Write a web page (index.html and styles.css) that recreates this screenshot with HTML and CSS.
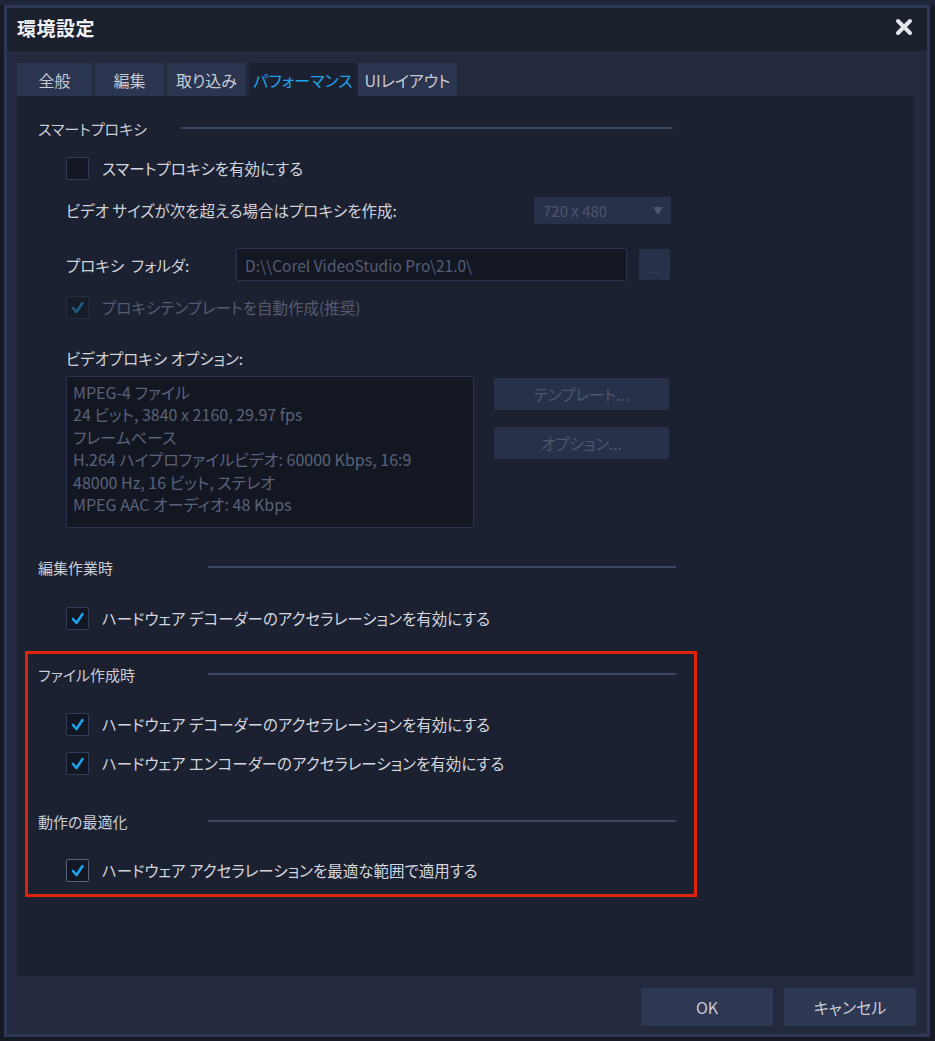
FILE: index.html
```html
<!DOCTYPE html>
<html lang="ja">
<head>
<meta charset="utf-8">
<title>環境設定</title>
<link rel="stylesheet" href="styles.css">
</head>
<body>
<div class="screen">
  <div class="dialog">
    <div class="titlebar">
      <span class="title">環境設定</span>
      <svg class="close" width="18" height="18" viewBox="0 0 18 18"><path d="M3 3 L15 15 M15 3 L3 15" stroke="#e4e6ee" stroke-width="4" stroke-linecap="round"/></svg>
    </div>
    <div class="body">
      <div class="tabs">
        <div class="tab t1">全般</div>
        <div class="tab t2">編集</div>
        <div class="tab t3">取り込み</div>
        <div class="tab t4 active">パフォーマンス</div>
        <div class="tab t5">UIレイアウト</div>
      </div>
      <div class="panel">
        <div class="heading h-proxy"><span class="htext">スマートプロキシ</span><span class="hline"></span></div>

        <div class="cbrow r-smart">
          <span class="cb"></span><span class="cblabel">スマートプロキシを有効にする</span>
        </div>

        <div class="row r-size">
          <span class="label">ビデオ サイズが次を超える場合はプロキシを作成:</span>
          <div class="dropdown"><span>720 x 480</span><span class="arrow">▼</span></div>
        </div>

        <div class="row r-folder">
          <span class="label folder-label">プロキシ&nbsp; フォルダ:</span>
          <div class="input">D:\\Corel VideoStudio Pro\21.0\</div>
          <div class="dots">...</div>
        </div>

        <div class="cbrow r-auto disabled">
          <span class="cb checked"><svg width="21" height="21" viewBox="0 0 21 21"><path d="M6 11 L9.5 15 L15.5 6" fill="none" stroke="#1c5d80" stroke-width="2.6" stroke-linecap="round" stroke-linejoin="round"/></svg></span><span class="cblabel">プロキシテンプレートを自動作成(推奨)</span>
        </div>

        <div class="row r-optlabel"><span class="label">ビデオプロキシ オプション:</span></div>

        <div class="optrow">
          <div class="textbox">
            <div>MPEG-4 ファイル</div>
            <div>24 ビット, 3840 x 2160, 29.97 fps</div>
            <div>フレームベース</div>
            <div>H.264 ハイプロファイルビデオ: 60000 Kbps, 16:9</div>
            <div>48000 Hz, 16 ビット, ステレオ</div>
            <div>MPEG AAC オーディオ: 48 Kbps</div>
          </div>
          <div class="optbtns">
            <div class="dbtn">テンプレート...</div>
            <div class="dbtn">オプション...</div>
          </div>
        </div>

        <div class="heading h-edit"><span class="htext">編集作業時</span><span class="hline"></span></div>
        <div class="cbrow r-edit">
          <span class="cb checked"><svg width="21" height="21" viewBox="0 0 21 21"><path d="M6 11 L9.5 15 L15.5 6" fill="none" stroke="#1ba3ec" stroke-width="2.6" stroke-linecap="round" stroke-linejoin="round"/></svg></span><span class="cblabel">ハードウェア デコーダーのアクセラレーションを有効にする</span>
        </div>

        <div class="highlight">
          <div class="heading h-in"><span class="htext">ファイル作成時</span><span class="hline"></span></div>
          <div class="cbrow r-dec">
            <span class="cb checked"><svg width="21" height="21" viewBox="0 0 21 21"><path d="M6 11 L9.5 15 L15.5 6" fill="none" stroke="#1ba3ec" stroke-width="2.6" stroke-linecap="round" stroke-linejoin="round"/></svg></span><span class="cblabel">ハードウェア デコーダーのアクセラレーションを有効にする</span>
          </div>
          <div class="cbrow r-enc">
            <span class="cb checked"><svg width="21" height="21" viewBox="0 0 21 21"><path d="M6 11 L9.5 15 L15.5 6" fill="none" stroke="#1ba3ec" stroke-width="2.6" stroke-linecap="round" stroke-linejoin="round"/></svg></span><span class="cblabel">ハードウェア エンコーダーのアクセラレーションを有効にする</span>
          </div>
          <div class="heading h-opt"><span class="htext">動作の最適化</span><span class="hline"></span></div>
          <div class="cbrow r-opt">
            <span class="cb checked light"><svg width="21" height="21" viewBox="0 0 21 21"><path d="M6 11 L9.5 15 L15.5 6" fill="none" stroke="#1ba3ec" stroke-width="2.6" stroke-linecap="round" stroke-linejoin="round"/></svg></span><span class="cblabel">ハードウェア アクセラレーションを最適な範囲で適用する</span>
          </div>
        </div>
      </div>
      <div class="footer">
        <div class="btn">OK</div>
        <div class="btn">キャンセル</div>
      </div>
    </div>
  </div>
</div>
</body>
</html>
```

FILE: styles.css
```css
* { box-sizing: border-box; }
html, body { margin: 0; padding: 0; }
body {
  background: #161a25;
  font-family: "Noto Sans CJK JP", "Noto Sans", sans-serif;
  font-feature-settings: "palt";
  color: #d0d3db;
  font-size: 15px;
}
.screen {
  width: 935px;
  height: 1041px;
  padding: 5px 0 0 4px;
  background: linear-gradient(#20263a 0 5px, #161a25 5px);
}
.dialog {
  width: 926px;
  height: 1032px;
  border: 3px solid #2f3758;
  background: #232a3e;
  display: flex;
  flex-direction: column;
}
.titlebar {
  height: 43px;
  background: #1b202d;
  display: flex;
  align-items: center;
  justify-content: space-between;
  padding: 0 14px 5px 10px;
  flex: none;
}
.title {
  font-size: 19px;
  font-weight: 700;
  color: #f0f1f5;
  letter-spacing: 0.5px;
  font-feature-settings: normal;
}
.close { display: block; }
.body {
  flex: 1;
  display: flex;
  flex-direction: column;
  padding: 12px 13px 0 10px;
}
.tabs {
  display: flex;
  gap: 3px;
  height: 33px;
  flex: none;
}
.tab {
  background: #2c3550;
  color: #c6c9d2;
  display: flex;
  align-items: center;
  justify-content: center;
  font-size: 16px;
}
.t1 { width: 75px; }
.t2 { width: 69px; }
.t3 { width: 79px; }
.t4 { width: 108px; }
.t5 { width: 99px; margin-left: -2px; }
.tab.active { background: #1c2131; color: #1ea3ea; }
.panel {
  background: #1c2131;
  height: 880px;
  padding: 20px 0 0 21px;
  flex: none;
}
.heading {
  display: flex;
  align-items: center;
  height: 24px;
  width: 638px;
  color: #c9ccd5;
  font-size: 15px;
}
.htext { flex: none; width: 170px; }
.h-proxy .htext { width: 143px; }
.h-proxy { width: 635px; }
.hline { flex: 1; height: 2px; background: #3b4566; }
.cbrow {
  display: flex;
  align-items: center;
  height: 24px;
  padding-left: 28px;
  gap: 13px;
  font-size: 15.5px;
}
.cb {
  width: 23px;
  height: 23px;
  border: 1px solid #333c58;
  border-radius: 2px;
  background: #131723;
  flex: none;
  display: flex;
  align-items: center;
  justify-content: center;
}
.cb.light { border-color: #5a6278; }
.disabled .cb { border-color: #262d42; background: #171c29; }
.disabled .cblabel { color: #545b70; }
.cblabel { color: #d3d6de; }
.r-smart { margin-top: 16px; }
.row {
  display: flex;
  align-items: center;
  width: 638px;
  padding-left: 28px;
  font-size: 15.5px;
}
.label { color: #d0d3db; }
.r-size { margin-top: 16px; height: 28px; }
.dropdown {
  margin-left: auto;
  margin-right: 5px;
  width: 137px;
  height: 27px;
  background: #29314a;
  border-radius: 2px;
  color: #4e566e;
  display: flex;
  align-items: center;
  justify-content: space-between;
  padding: 0 8px 0 9px;
  font-size: 15px;
}
.arrow { font-size: 10px; color: #4e566e; }
.r-folder { margin-top: 24px; height: 33px; }
.folder-label { width: 170px; flex: none; }
.input {
  width: 391px;
  height: 33px;
  background: #131722;
  border: 1px solid #2b3350;
  border-radius: 2px;
  color: #545c74;
  display: flex;
  align-items: center;
  padding-left: 8px;
  font-size: 15.5px;
}
.dots {
  margin-left: 12px;
  width: 31px;
  height: 31px;
  background: #29314a;
  border-radius: 2px;
  color: #4e566e;
  display: flex;
  align-items: flex-end;
  justify-content: center;
  padding-bottom: 6px;
  font-size: 11px;
  line-height: 1;
}
.r-auto { margin-top: 14px; }
.r-optlabel { margin-top: 29px; height: 20px; }
.optrow {
  margin-top: 8px;
  padding-left: 28px;
  display: flex;
  gap: 20px;
}
.textbox {
  width: 408px;
  height: 152px;
  background: #131722;
  border: 1px solid #2b3350;
  border-radius: 2px;
  padding: 4px 0 0 6px;
  color: #5a627a;
  font-size: 16px;
  line-height: 22.4px;
}
.optbtns {
  padding-top: 2px;
  display: flex;
  flex-direction: column;
  gap: 17px;
}
.dbtn {
  width: 175px;
  height: 32px;
  background: #29314a;
  border-radius: 2px;
  color: #4e566e;
  display: flex;
  align-items: center;
  justify-content: center;
  font-size: 15.5px;
}
.h-edit { margin-top: 27px; }
.r-edit { margin-top: 27px; }
.highlight {
  margin-top: 21px;
  margin-left: -13px;
  width: 672px;
  border: 3px solid #e0240c;
  padding: 8px 18px 12px 10px;
}
.r-dec { margin-top: 26px; }
.r-enc { margin-top: 15px; }
.h-opt { margin-top: 34px; }
.r-opt { margin-top: 25px; }
.footer {
  flex: 1;
  display: flex;
  justify-content: flex-end;
  align-items: flex-start;
  gap: 11px;
  padding: 12px 0 0 0;
  margin-right: -2px;
}
.btn {
  width: 132px;
  height: 38px;
  background: #2e3853;
  color: #c9ccd6;
  display: flex;
  align-items: center;
  justify-content: center;
  font-size: 16px;
}
```
